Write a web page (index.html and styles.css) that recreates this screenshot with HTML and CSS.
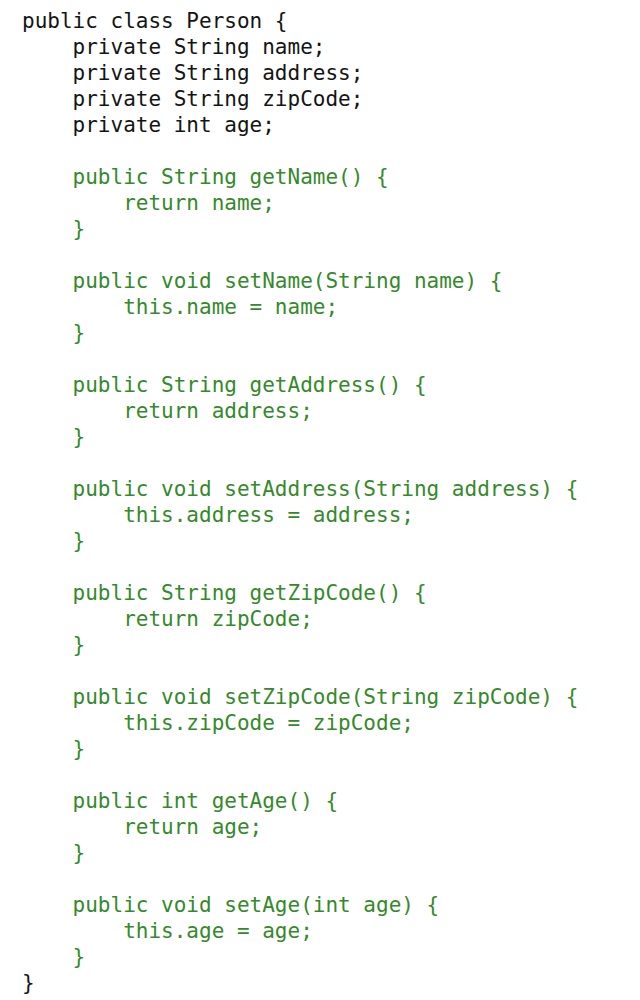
FILE: index.html
```html
<!DOCTYPE html>
<html>
<head>
<meta charset="utf-8">
<link rel="stylesheet" href="styles.css">
</head>
<body>
<pre class="code"><span class="plain">public class Person {
    private String name;
    private String address;
    private String zipCode;
    private int age;
</span><span class="green">
    public String getName() {
        return name;
    }

    public void setName(String name) {
        this.name = name;
    }

    public String getAddress() {
        return address;
    }

    public void setAddress(String address) {
        this.address = address;
    }

    public String getZipCode() {
        return zipCode;
    }

    public void setZipCode(String zipCode) {
        this.zipCode = zipCode;
    }

    public int getAge() {
        return age;
    }

    public void setAge(int age) {
        this.age = age;
    }
</span><span class="plain">}</span></pre>
</body>
</html>
```
FILE: styles.css
```css
html, body {
  margin: 0;
  padding: 0;
  background: #ffffff;
}
.code {
  margin: 0;
  padding: 8px 0 0 22px;
  font-family: "DejaVu Sans Mono", "Liberation Mono", monospace;
  font-size: 21px;
  line-height: 26px;
  white-space: pre;
}
.plain {
  color: #141414;
}
.green {
  color: #348a2a;
}
```
